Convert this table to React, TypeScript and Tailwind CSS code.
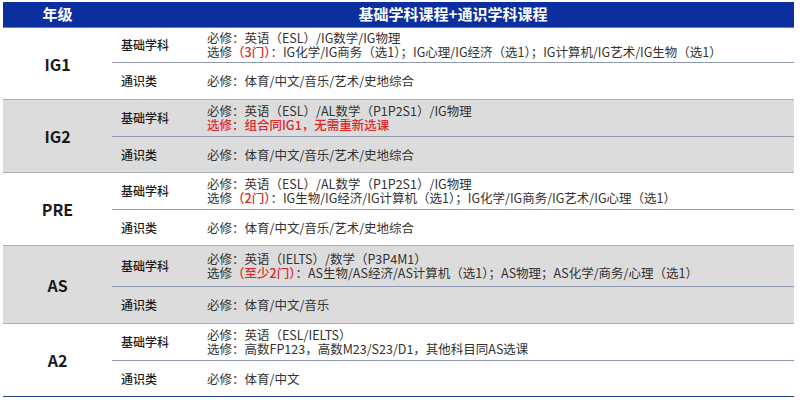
import React from 'react'

type Line = { parts: { text: string; red?: boolean }[] }

type Grade = {
    name: string
    gray?: boolean
    baseH: string
    genH: string
    base: Line[]
    general: string
}

const t = (text: string, red?: boolean) => ({ text, red })

const GRADES: Grade[] = [
    {
        name: 'IG1',
        baseH: 'h-[35px]',
        genH: 'h-[36px]',
        base: [
            { parts: [t('必修：英语（ESL）/IG数学/IG物理')] },
            {
                parts: [
                    t('选修'),
                    t('（3门）', true),
                    t('：IG化学/IG商务（选1）；IG心理/IG经济（选1）；IG计算机/IG艺术/IG生物（选1）'),
                ],
            },
        ],
        general: '必修：体育/中文/音乐/艺术/史地综合',
    },
    {
        name: 'IG2',
        gray: true,
        baseH: 'h-[37px]',
        genH: 'h-[35px]',
        base: [
            { parts: [t('必修：英语（ESL）/AL数学（P1P2S1）/IG物理')] },
            { parts: [t('选修：组合同IG1，无需重新选课', true)] },
        ],
        general: '必修：体育/中文/音乐/艺术/史地综合',
    },
    {
        name: 'PRE',
        baseH: 'h-[37px]',
        genH: 'h-[35px]',
        base: [
            { parts: [t('必修：英语（ESL）/AL数学（P1P2S1）/IG物理')] },
            {
                parts: [
                    t('选修'),
                    t('（2门）', true),
                    t('：IG生物/IG经济/IG计算机（选1）；IG化学/IG商务/IG艺术/IG心理（选1）'),
                ],
            },
        ],
        general: '必修：体育/中文/音乐/艺术/史地综合',
    },
    {
        name: 'AS',
        gray: true,
        baseH: 'h-[41px]',
        genH: 'h-[36px]',
        base: [
            { parts: [t('必修：英语（IELTS）/数学（P3P4M1）')] },
            {
                parts: [
                    t('选修'),
                    t('（至少2门）', true),
                    t('：AS生物/AS经济/AS计算机（选1）；AS物理；AS化学/商务/心理（选1）'),
                ],
            },
        ],
        general: '必修：体育/中文/音乐',
    },
    {
        name: 'A2',
        baseH: 'h-[37px]',
        genH: 'h-[35px]',
        base: [
            { parts: [t('必修：英语（ESL/IELTS）')] },
            { parts: [t('选修：高数FP123，高数M23/S23/D1，其他科目同AS选课')] },
        ],
        general: '必修：体育/中文',
    },
]

const GradeRow = ({ grade, last }: { grade: Grade; last: boolean }) => (
    <div
        className={`flex border-b-[1.5px] ${last ? 'border-[#1f3f8f]' : 'border-[#a9adb5]'} ${
            grade.gray ? 'bg-[#dcdcdc]' : 'bg-white'
        }`}
    >
        <div className="w-[109px] flex items-center justify-center text-[16px] font-semibold text-[#1a1a1a]">
            {grade.name}
        </div>
        <div className="flex-1 flex flex-col">
            <div className={`flex items-center ${grade.baseH} border-b-[1.5px] border-[#8f9ab0]`}>
                <div className="w-[95px] pl-[9px] text-[12px] font-medium text-[#1a1a1a]">基础学科</div>
                <div className="flex-1 flex flex-col text-[12.5px] leading-[14px] text-[#333333]">
                    {grade.base.map((line, i) => (
                        <div key={i} className="whitespace-nowrap">
                            {line.parts.map((p, j) => (
                                <span key={j} className={p.red ? 'text-[#e0262a] font-medium' : ''}>
                                    {p.text}
                                </span>
                            ))}
                        </div>
                    ))}
                </div>
            </div>
            <div className={`flex items-center ${grade.genH}`}>
                <div className="w-[95px] pl-[9px] text-[12px] font-medium text-[#1a1a1a]">通识类</div>
                <div className="flex-1 text-[12.5px] leading-[14px] text-[#333333] whitespace-nowrap">
                    {grade.general}
                </div>
            </div>
        </div>
    </div>
)

const App = () => (
    <div
        className="w-[800px] h-[400px] bg-white pt-[2px] pl-[3px] pr-[6px]"
        style={{ fontFamily: '"Noto Sans CJK SC", "Noto Sans", sans-serif' }}
    >
        <div className="flex h-[26px] bg-[#0b2f9f] text-white text-[15px] font-bold items-center border-b border-[#5b7fd6]">
            <div className="w-[109px] text-center">年级</div>
            <div className="flex-1 text-center">基础学科课程+通识学科课程</div>
        </div>
        {GRADES.map((g, i) => (
            <GradeRow key={g.name} grade={g} last={i === GRADES.length - 1} />
        ))}
    </div>
)

export default App
